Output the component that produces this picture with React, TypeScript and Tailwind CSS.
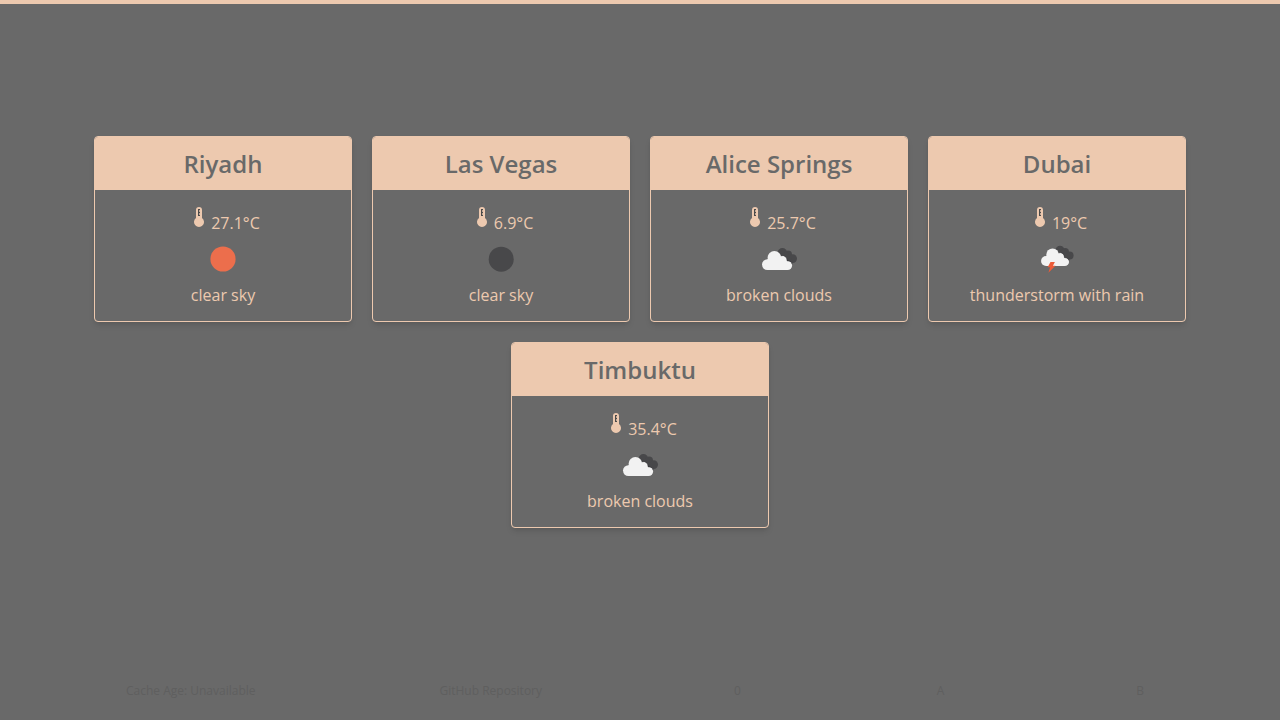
type Sky = "sun" | "moon" | "clouds" | "storm";

interface City {
  name: string;
  temperature: string;
  sky: Sky;
  description: string;
}

const cities: City[] = [
  { name: "Riyadh", temperature: "27.1°C", sky: "sun", description: "clear sky" },
  { name: "Las Vegas", temperature: "6.9°C", sky: "moon", description: "clear sky" },
  { name: "Alice Springs", temperature: "25.7°C", sky: "clouds", description: "broken clouds" },
  { name: "Dubai", temperature: "19°C", sky: "storm", description: "thunderstorm with rain" },
  { name: "Timbuktu", temperature: "35.4°C", sky: "clouds", description: "broken clouds" },
];

function Thermometer() {
  return (
    <svg className="h-5 w-[18px]" viewBox="-8 0 18 20" fill="none" aria-hidden="true">
      <path
        d="M2 3Q2 0 5 0Q8 0 8 3V11A5 5 0 1 1 2 11Z"
        fill="#edc9af"
      />
      <path d="M4 2h2v1.2H5v1.6h1v1.4H5v1.6h1V9H4z" fill="#4a4a4a" />
    </svg>
  );
}

function CloudPair() {
  return (
    <>
      <g fill="#48484a">
        <circle cx="28.4" cy="18.9" r="4.8" />
        <circle cx="34" cy="20.6" r="4" />
        <circle cx="38.7" cy="24.6" r="4.3" />
        <path d="M24 20l10-2 5 10.9H28z" />
      </g>
      <g fill="#f2f2f2">
        <circle cx="13.4" cy="30.6" r="5.4" />
        <circle cx="20.4" cy="23.8" r="6.8" />
        <circle cx="28.4" cy="26.4" r="4.6" />
        <circle cx="33.6" cy="31.5" r="4.5" />
        <path d="M13.4 36V25.2L20 23l9 1 4.6 4V36z" />
      </g>
      <path
        d="M26.8 21.8a4.8 4.8 0 0 1 6.4 5a4.7 4.7 0 0 1 5 3.2"
        fill="none"
        stroke="#38383a"
        strokeWidth="0.6"
      />
    </>
  );
}

function SkyIcon({ sky }: { sky: Sky }) {
  return (
    <svg className="h-[50px] w-[50px]" viewBox="0 0 50 50" aria-hidden="true">
      {sky === "sun" && <circle cx="25" cy="25" r="12.6" fill="#ec6e4c" />}
      {sky === "moon" && <circle cx="25.2" cy="25.2" r="12.5" fill="#48484a" />}
      {sky === "clouds" && <CloudPair />}
      {sky === "storm" && (
        <>
          <g transform="translate(1.6 -1.4) scale(0.93)">
            <CloudPair />
          </g>
          <path
            d="M18.5 28h4.4l-2 3.7h2.6L16.4 38.8l1.7-5.6h-2.5z"
            fill="#ec5b38"
          />
        </>
      )}
    </svg>
  );
}

function CityCard({ city }: { city: City }) {
  return (
    <article className="w-[258px] overflow-hidden rounded border border-[#edc9af] text-center text-[#edc9af] shadow-md">
      <h2 className="bg-[#edc9af] pt-[9px] pb-2 text-2xl leading-9 font-semibold text-[#696969]">
        {city.name}
      </h2>
      <div className="flex flex-col items-center pt-[17px] pb-[14px] text-base leading-6">
        <p className="flex h-[27px] items-start justify-center gap-[7px]">
          <Thermometer />
          <span className="pt-1">{city.temperature}</span>
        </p>
        <SkyIcon sky={city.sky} />
        <p className="-mt-px">{city.description}</p>
      </div>
    </article>
  );
}

export default function App() {
  return (
    <div className="flex min-h-screen flex-col border-t-4 border-[#edc9af] bg-[#696969] font-['Open_Sans','Noto_Sans',sans-serif]">
      <main className="flex grow flex-wrap content-center justify-center gap-5 px-5 pb-0.5">
        {cities.map((city) => (
          <CityCard key={city.name} city={city} />
        ))}
      </main>
      <footer className="flex h-[58px] items-center justify-around pr-10 pl-[34px] text-xs text-[#5f5f5f]">
        <span>Cache Age: Unavailable</span>
        <a href="#repository">GitHub Repository</a>
        <button type="button" className="px-2">0</button>
        <button type="button" className="px-1">A</button>
        <button type="button" className="px-1">B</button>
      </footer>
    </div>
  );
}
